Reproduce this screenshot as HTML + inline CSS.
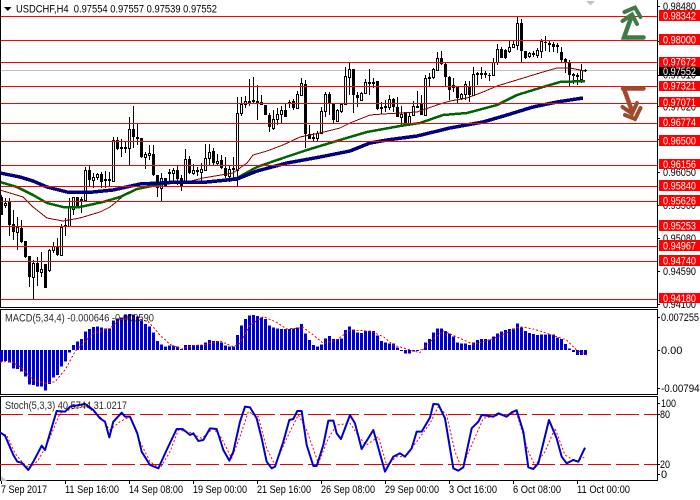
<!DOCTYPE html>
<html><head><meta charset="utf-8"><style>
html,body{margin:0;padding:0;background:#fff;width:700px;height:500px;overflow:hidden}
svg{display:block}
text{font-family:"Liberation Sans",sans-serif;font-size:11px;fill:#000}
.w{fill:#fff}
</style></head><body>
<svg width="700" height="500" viewBox="0 0 700 500" xmlns="http://www.w3.org/2000/svg">
<rect width="700" height="500" fill="#fff"/>
<g shape-rendering="crispEdges">
<path d="M0 70.5H657" stroke="#c0c0c0" fill="none"/>
<!-- wicks -->
<path stroke="#000" fill="none" d="M1.5 195V215M5.5 198V208M9.5 198V236M13.5 210V240M17.5 217V250M21.5 220V243M25.5 241V258M29.5 256V287M33.5 260V299M37.5 257V286M41.5 252V277M45.5 264V288M49.5 249V272M53.5 242V253M57.5 238V256M61.5 224V256M65.5 218V236M69.5 198V226M73.5 197V215M77.5 197V207M81.5 197V213M85.5 167V201M89.5 166V187M93.5 173V188M97.5 173V180M101.5 172V188M105.5 171V188M109.5 172V187M113.5 137V182M117.5 137V150M121.5 139V157M125.5 142V153M129.5 117V165M133.5 106V148M137.5 124V145M141.5 138V158M145.5 152V169M149.5 145V160M153.5 145V176M157.5 175V197M161.5 173V201M165.5 178V187M169.5 169V183M173.5 168V182M177.5 165V185M181.5 175V191M185.5 149V181M189.5 156V174M193.5 164V175M197.5 167V176M201.5 163V181M205.5 144V170M209.5 144V165M213.5 148V165M217.5 154V166M221.5 155V169M225.5 157V178M229.5 166V182M233.5 157V178M237.5 97V186M241.5 97V116M245.5 96V108M249.5 79V106M253.5 77V103M257.5 85V120M261.5 95V105M265.5 105V115M269.5 113V132M273.5 110V130M277.5 108V125M281.5 106V123M285.5 103V117M289.5 100V108M293.5 99V110M297.5 91V109M301.5 78V95M305.5 80V148M309.5 125V139M313.5 133V142M317.5 131V142M321.5 107V133M325.5 92V117M329.5 92V115M333.5 103V123M337.5 109V121M341.5 103V113M345.5 67V104M349.5 63V95M353.5 69V113M357.5 92V107M361.5 92V100M365.5 79V93M369.5 69V95M373.5 78V88M377.5 81V110M381.5 102V114M385.5 100V112M389.5 95V110M393.5 98V112M397.5 97V117M401.5 106V125M405.5 113V126M409.5 113V124M413.5 101V115M417.5 91V108M421.5 95V115M425.5 75V115M429.5 73V86M433.5 68V79M437.5 52V70M441.5 51V65M445.5 63V86M449.5 76V100M453.5 78V92M457.5 86V103M461.5 93V100M465.5 81V100M469.5 81V102M473.5 67V95M477.5 72V85M481.5 67V79M485.5 71V78M489.5 73V81M493.5 58V75M497.5 44V65M501.5 47V58M505.5 49V59M509.5 40V53M513.5 41V48M517.5 17V50M521.5 19V62M525.5 51V59M529.5 52V58M533.5 51V57M537.5 48V58M541.5 39V58M545.5 36V51M549.5 40V52M553.5 42V52M557.5 43V53M561.5 47V62M565.5 58V73M569.5 60V86M573.5 73V84M577.5 73V85M581.5 64V83M585.5 69V72"/>
<!-- black bodies -->
<path fill="#000" d="M0 197h3V215H0zM8 202h3V225H8zM12 224h3V232h-3zM20 228h3V242h-3zM24 241h3V257h-3zM28 256h3V277h-3zM36 263h3V272h-3zM44 264h3V288h-3zM56 246h3V255h-3zM64 225h3V227h-3zM76 197h3V206h-3zM80 199h3V202h-3zM88 170h3V180h-3zM100 174h3V182h-3zM104 179h3V181h-3zM108 179h3V181h-3zM116 140h3V149h-3zM120 147h3V149h-3zM124 147h3V149h-3zM132 129h3V137h-3zM136 137h3V139h-3zM140 138h3V157h-3zM152 154h3V175h-3zM156 175h3V188h-3zM164 178h3V186h-3zM168 172h3V174h-3zM176 170h3V179h-3zM180 178h3V187h-3zM188 159h3V173h-3zM196 170h3V172h-3zM212 151h3V163h-3zM220 160h3V168h-3zM224 168h3V176h-3zM232 168h3V170h-3zM248 101h3V103h-3zM252 100h3V102h-3zM256 101h3V103h-3zM260 102h3V105h-3zM264 105h3V115h-3zM268 115h3V127h-3zM284 110h3V117h-3zM288 102h3V104h-3zM292 101h3V108h-3zM304 84h3V134h-3zM308 134h3V139h-3zM312 137h3V139h-3zM328 94h3V103h-3zM332 103h3V120h-3zM352 69h3V95h-3zM356 95h3V98h-3zM368 82h3V84h-3zM372 82h3V84h-3zM376 81h3V109h-3zM380 107h3V109h-3zM384 106h3V108h-3zM392 99h3V107h-3zM396 107h3V117h-3zM404 113h3V123h-3zM416 106h3V108h-3zM420 104h3V115h-3zM428 77h3V79h-3zM440 58h3V64h-3zM444 64h3V77h-3zM448 77h3V90h-3zM452 85h3V88h-3zM456 86h3V98h-3zM468 86h3V95h-3zM476 73h3V75h-3zM480 73h3V75h-3zM484 73h3V75h-3zM488 75h3V76h-3zM500 49h3V58h-3zM504 50h3V58h-3zM520 23h3V51h-3zM524 51h3V58h-3zM532 53h3V55h-3zM544 42h3V43h-3zM548 43h3V45h-3zM552 44h3V47h-3zM556 45h3V47h-3zM560 52h3V60h-3zM564 59h3V62h-3zM568 62h3V75h-3zM572 74h3V76h-3zM576 75h3V77h-3zM584 70h3V71h-3z"/>
<!-- white bodies -->
<path fill="#fff" stroke="#000" d="M4.500 203.500h2V205.500h-2zM16.500 227.500h2V232.500h-2zM32.500 263.500h2V277.500h-2zM40.500 269.500h2V272.500h-2zM48.500 250.500h2V270.500h-2zM52.500 246.500h2V250.500h-2zM60.500 227.500h2V255.500h-2zM68.500 207.500h2V226.500h-2zM72.500 197.500h2V209.500h-2zM84.500 170.500h2V200.500h-2zM92.500 177.500h2V180.500h-2zM96.500 174.500h2V177.500h-2zM112.500 140.500h2V181.500h-2zM128.500 129.500h2V148.500h-2zM144.500 154.500h2V157.500h-2zM148.500 153.500h2V155.500h-2zM160.500 178.500h2V188.500h-2zM172.500 170.500h2V173.500h-2zM184.500 159.500h2V181.500h-2zM192.500 170.500h2V173.500h-2zM200.500 169.500h2V172.500h-2zM204.500 158.500h2V170.500h-2zM208.500 152.500h2V158.500h-2zM216.500 161.500h2V163.500h-2zM228.500 169.500h2V176.500h-2zM236.500 113.500h2V170.500h-2zM240.500 104.500h2V113.500h-2zM244.500 101.500h2V104.500h-2zM272.500 119.500h2V128.500h-2zM276.500 114.500h2V119.500h-2zM280.500 110.500h2V114.500h-2zM296.500 94.500h2V108.500h-2zM300.500 83.500h2V95.500h-2zM316.500 133.500h2V138.500h-2zM320.500 111.500h2V133.500h-2zM324.500 94.500h2V111.500h-2zM336.500 110.500h2V121.500h-2zM340.500 104.500h2V111.500h-2zM344.500 76.500h2V104.500h-2zM348.500 69.500h2V77.500h-2zM360.500 93.500h2V100.500h-2zM364.500 82.500h2V93.500h-2zM388.500 99.500h2V107.500h-2zM400.500 114.500h2V117.500h-2zM408.500 116.500h2V123.500h-2zM412.500 106.500h2V115.500h-2zM424.500 78.500h2V115.500h-2zM432.500 69.500h2V77.500h-2zM436.500 58.500h2V70.500h-2zM460.500 94.500h2V98.500h-2zM464.500 84.500h2V94.500h-2zM472.500 74.500h2V95.500h-2zM492.500 62.500h2V75.500h-2zM496.500 49.500h2V62.500h-2zM508.500 47.500h2V51.500h-2zM512.500 44.500h2V47.500h-2zM516.500 23.500h2V45.500h-2zM528.500 53.500h2V56.500h-2zM536.500 50.500h2V55.500h-2zM540.500 41.500h2V51.500h-2zM580.500 70.500h2V79.500h-2z"/>
</g>
<!-- moving averages -->
<g fill="none" stroke-linejoin="round" shape-rendering="crispEdges">
<polyline stroke="#8b0000" stroke-width="1" points="0,190 23,197 33,207 47,218 63,221 80,218 100,212 110,207 127,193 157,183 187,182 203,178 233,173 247,163 253,155 267,151 283,145 300,137 320,133 340,128 350,123 370,115 383,114 400,113 417,112 437,105 450,101 467,98 483,92 497,86 520,79 543,72 557,68 570,68 585,71"/>
<polyline stroke="#006400" stroke-width="2.500" points="0,182 17,187 33,195 47,203 63,207 80,207 103,202 120,197 137,189 167,183 207,182 237,178 257,167 283,158 307,150 330,143 350,137 367,132 400,126 420,123 443,115 467,113 497,105 517,95 543,87 560,82 585,81"/>
<polyline stroke="#00007f" stroke-width="3.500" points="0,173 20,177 33,181 47,187 67,192 93,192 113,190 140,184 180,182 207,182 237,179 257,171 287,163 320,157 350,151 370,143 387,140 417,136 450,128 483,122 507,115 533,107 557,102 583,98"/>
</g>
<!-- horizontal levels -->
<path shape-rendering="crispEdges" stroke="#f00" fill="none" d="M0 16.500H657M0 40.500H657M0 62.500H657M0 86.500H657M0 103.500H657M0 123.500H657M0 141.500H657M0 165.500H657M0 186.500H657M0 201.500H657M0 226.500H657M0 246.500H657M0 261.500H657M0 299.500H657"/>
<!-- frames -->
<path shape-rendering="crispEdges" stroke="#000" fill="none" d="M0.500 0V307.500H657M657.500 0V308M0.500 309.500H657.500V394.500H0.500ZM0.500 396.500H657.500V480.500H0.500Z"/>
<path shape-rendering="crispEdges" stroke="#000" fill="none" d="M658 6.500h2M658 41.500h2M658 75.500h2M658 106.500h2M658 139.500h2M658 172.500h2M658 205.500h2M658 238.500h2M658 271.500h2M658 304.500h2M658 317.500h2M658 350.500h2M658 388.500h2M658 403.500h2M658 414.500h2M658 464.500h2M658 474.500h2M1.500 481v3M65.500 481v3M129.500 481v3M193.500 481v3M257.500 481v3M321.500 481v3M385.500 481v3M449.500 481v3M513.500 481v3M577.500 481v3"/>
<path fill="#c4c4c4" d="M586 1h9l-4.500 4.500z"/>
<path fill="#c4c4c4" d="M1 476l6 5H1z"/>
<!-- header -->
<path fill="#000" d="M4 7h7.500l-3.700 4z"/>
<text x="16" y="12.500" textLength="201" lengthAdjust="spacingAndGlyphs" xml:space="preserve">USDCHF,H4  0.97554 0.97557 0.97539 0.97552</text>
<!-- axis labels underneath -->
<text x="663" y="10" textLength="33" lengthAdjust="spacingAndGlyphs">0.98480</text>
<text x="663" y="78.500" textLength="33" lengthAdjust="spacingAndGlyphs">0.97510</text>
<text x="663" y="110.500" textLength="33" lengthAdjust="spacingAndGlyphs">0.97020</text>
<text x="663" y="176" textLength="33" lengthAdjust="spacingAndGlyphs">0.96050</text>
<text x="663" y="209" textLength="33" lengthAdjust="spacingAndGlyphs">0.95560</text>
<text x="663" y="242" textLength="33" lengthAdjust="spacingAndGlyphs">0.95080</text>
<text x="663" y="275" textLength="33" lengthAdjust="spacingAndGlyphs">0.94590</text>
<text x="663" y="308" textLength="33" lengthAdjust="spacingAndGlyphs">0.94100</text>
<!-- price tags -->
<g shape-rendering="crispEdges" fill="#f00">
<rect x="659" y="10" width="41" height="11"/><rect x="659" y="34" width="41" height="11"/><rect x="659" y="57" width="41" height="10"/><rect x="659" y="81" width="41" height="10"/><rect x="659" y="97" width="41" height="10"/><rect x="659" y="117" width="41" height="10"/><rect x="659" y="135" width="41" height="11"/><rect x="659" y="159" width="41" height="10"/><rect x="659" y="180" width="41" height="11"/><rect x="659" y="195" width="41" height="11"/><rect x="659" y="220" width="41" height="11"/><rect x="659" y="240" width="41" height="11"/><rect x="659" y="255" width="41" height="11"/><rect x="659" y="293" width="41" height="10"/>
<rect x="659" y="67" width="41" height="9" fill="#000"/>
</g>
<g text-anchor="start">
<text class="w" x="663" y="19.500" textLength="33" lengthAdjust="spacingAndGlyphs">0.98342</text>
<text class="w" x="663" y="43.500" textLength="33" lengthAdjust="spacingAndGlyphs">0.98000</text>
<text class="w" x="663" y="65.500" textLength="33" lengthAdjust="spacingAndGlyphs">0.97672</text>
<text class="w" x="663" y="75" textLength="33" lengthAdjust="spacingAndGlyphs">0.97552</text>
<text class="w" x="663" y="89.500" textLength="33" lengthAdjust="spacingAndGlyphs">0.97321</text>
<text class="w" x="663" y="106" textLength="33" lengthAdjust="spacingAndGlyphs">0.97071</text>
<text class="w" x="663" y="126" textLength="33" lengthAdjust="spacingAndGlyphs">0.96774</text>
<text class="w" x="663" y="144.500" textLength="33" lengthAdjust="spacingAndGlyphs">0.96500</text>
<text class="w" x="663" y="168" textLength="33" lengthAdjust="spacingAndGlyphs">0.96156</text>
<text class="w" x="663" y="189.500" textLength="33" lengthAdjust="spacingAndGlyphs">0.95840</text>
<text class="w" x="663" y="204.500" textLength="33" lengthAdjust="spacingAndGlyphs">0.95626</text>
<text class="w" x="663" y="229.500" textLength="33" lengthAdjust="spacingAndGlyphs">0.95253</text>
<text class="w" x="663" y="249.500" textLength="33" lengthAdjust="spacingAndGlyphs">0.94967</text>
<text class="w" x="663" y="264.500" textLength="33" lengthAdjust="spacingAndGlyphs">0.94740</text>
<text class="w" x="663" y="302" textLength="33" lengthAdjust="spacingAndGlyphs">0.94180</text>
</g>
<!-- arrows -->
<g fill="none" stroke-linejoin="miter" stroke-linecap="round">
<g stroke="#3f7a47" stroke-width="4">
<path d="M624.500 12 635 7.500 640.500 17"/>
<path d="M622.500 21 632 14.500 637 24"/>
<path stroke-width="4.500" d="M632 15 624 37.500H643.500"/>
</g>
<g stroke="#a04a2c" stroke-width="4">
<path stroke-width="4.500" d="M623 88.500H643.500M624 89 632 111"/>
<path d="M622.500 107 632 113.500 637 103"/>
<path d="M625 115 635 119 640.500 108"/>
</g>
</g>
<!-- MACD -->
<g transform="translate(0 305) scale(.33333)" shape-rendering="crispEdges">
<path fill="#0000cd" d="M0 135h9V170H0zM12 135h9V168h-9zM24 135h9V172h-9zM36 135h9V190h-9zM48 135h9V192h-9zM60 135h9V200h-9zM72 135h9V215h-9zM84 135h9V238h-9zM96 135h9V240h-9zM108 135h9V245h-9zM120 135h9V245h-9zM132 135h9V257h-9zM144 135h9V237h-9zM156 135h9V218h-9zM168 135h9V210h-9zM180 135h9V185h-9zM192 135h9V170h-9zM204 135h9V143h-9zM216 135h9V120h-9zM228 135h9V110h-9zM240 135h9V102h-9zM252 135h9V80h-9zM264 135h9V72h-9zM276 135h9V66h-9zM288 135h9V64h-9zM300 135h9V67h-9zM312 135h9V70h-9zM324 135h9V70h-9zM336 135h9V47h-9zM348 135h9V40h-9zM360 135h9V38h-9zM372 135h9V30h-9zM384 135h9V27h-9zM396 135h9V28h-9zM408 135h9V35h-9zM420 135h9V47h-9zM432 135h9V57h-9zM444 135h9V65h-9zM456 135h9V83h-9zM468 135h9V108h-9zM480 135h9V118h-9zM492 135h9V125h-9zM504 135h9V122h-9zM516 135h9V122h-9zM528 135h9V125h-9zM540 135h9V132h-9zM552 135h9V120h-9zM564 135h9V120h-9zM576 135h9V120h-9zM588 135h9V120h-9zM600 135h9V120h-9zM612 135h9V112h-9zM624 135h9V105h-9zM636 135h9V108h-9zM648 135h9V108h-9zM660 135h9V112h-9zM672 135h9V122h-9zM684 135h9V125h-9zM696 135h9V125h-9zM708 135h9V90h-9zM720 135h9V62h-9zM732 135h9V42h-9zM744 135h9V32h-9zM756 135h9V30h-9zM768 135h9V33h-9zM780 135h9V37h-9zM792 135h9V42h-9zM804 135h9V62h-9zM816 135h9V68h-9zM828 135h9V70h-9zM840 135h9V72h-9zM852 135h9V72h-9zM864 135h9V72h-9zM876 135h9V70h-9zM888 135h9V68h-9zM900 135h9V57h-9zM912 135h9V85h-9zM924 135h9V105h-9zM936 135h9V120h-9zM948 135h9V125h-9zM960 135h9V118h-9zM972 135h9V100h-9zM984 135h9V93h-9zM996 135h9V102h-9zM1008 135h9V102h-9zM1020 135h9V100h-9zM1032 135h9V75h-9zM1044 135h9V65h-9zM1056 135h9V73h-9zM1068 135h9V82h-9zM1080 135h9V84h-9zM1092 135h9V78h-9zM1104 135h9V78h-9zM1116 135h9V78h-9zM1128 135h9V92h-9zM1140 135h9V108h-9zM1152 135h9V113h-9zM1164 135h9V115h-9zM1176 135h9V115h-9zM1188 135h9V128h-9zM1200 135h9V138h-9zM1212 135h9V146h-9zM1224 135h9V146h-9zM1236 135h9V140h-9zM1248 135h9V138h-9zM1260 135h9V133h-9zM1272 135h9V113h-9zM1284 135h9V102h-9zM1296 135h9V82h-9zM1308 135h9V71h-9zM1320 135h9V70h-9zM1332 135h9V78h-9zM1344 135h9V85h-9zM1356 135h9V95h-9zM1368 135h9V112h-9zM1380 135h9V115h-9zM1392 135h9V115h-9zM1404 135h9V120h-9zM1416 135h9V112h-9zM1428 135h9V105h-9zM1440 135h9V102h-9zM1452 135h9V102h-9zM1464 135h9V104h-9zM1476 135h9V94h-9zM1488 135h9V85h-9zM1500 135h9V80h-9zM1512 135h9V75h-9zM1524 135h9V72h-9zM1536 135h9V70h-9zM1548 135h9V55h-9zM1560 135h9V67h-9zM1572 135h9V78h-9zM1584 135h9V84h-9zM1596 135h9V87h-9zM1608 135h9V90h-9zM1620 135h9V88h-9zM1632 135h9V88h-9zM1644 135h9V88h-9zM1656 135h9V88h-9zM1668 135h9V98h-9zM1680 135h9V102h-9zM1692 135h9V117h-9zM1704 135h9V130h-9zM1716 135h9V141h-9zM1728 135h9V150h-9zM1740 135h9V150h-9zM1752 135h9V150h-9z"/>
<polyline fill="none" stroke="#f00" stroke-width="3" stroke-dasharray="6 6" points="0,172 30,168 60,185 100,225 136,235 165,230 195,195 225,140 250,115 280,85 330,70 360,45 400,37 445,50 480,90 510,118 545,132 580,122 620,118 660,108 700,125 720,115 750,60 790,35 830,52 860,72 910,68 940,90 970,115 1010,105 1050,75 1110,78 1150,95 1180,120 1220,132 1260,143 1290,110 1330,78 1380,100 1420,118 1470,105 1510,88 1560,65 1600,72 1650,88 1700,105 1730,135 1760,150"/>
</g>
<text x="5" y="321.500" textLength="149" lengthAdjust="spacingAndGlyphs" fill-opacity=".85">MACD(5,34,4) -0.000646 -0.000590</text>
<text x="661" y="321" textLength="38" lengthAdjust="spacingAndGlyphs">0.007255</text>
<text x="661" y="354">0.00</text>
<text x="661" y="392" textLength="44" lengthAdjust="spacingAndGlyphs">-0.007947</text>
<!-- Stochastic -->
<path shape-rendering="crispEdges" fill="none" stroke="#e60000" stroke-dasharray="23 5" d="M0 414.500H657M0 464.500H657"/>
<g transform="translate(0 305) scale(.33333)" fill="none" stroke-linejoin="round">
<polyline stroke="#f00" stroke-width="3" stroke-dasharray="6 6" points="0,385 20,390 45,445 70,475 90,490 115,465 135,430 155,385 180,325 220,310 260,305 300,335 330,375 360,350 390,335 420,410 450,470 480,490 510,440 535,375 570,382 605,400 640,370 665,400 695,460 720,395 745,320 775,335 800,430 825,480 860,400 895,330 920,375 955,475 985,400 1010,360 1050,355 1080,400 1100,420 1135,395 1160,480 1190,455 1215,455 1250,410 1290,355 1315,305 1340,330 1365,440 1385,490 1415,420 1450,340 1500,330 1550,325 1585,440 1605,482 1635,440 1665,370 1695,450 1730,470 1755,455"/>
<polyline stroke="#0000cd" stroke-width="6" points="0,382 15,392 40,450 52,470 65,473 85,495 100,470 125,422 135,435 150,385 170,318 195,320 210,305 255,297 280,315 300,340 315,350 328,397 340,350 365,323 375,335 390,335 412,385 425,440 450,480 475,490 500,435 530,372 548,372 570,390 580,385 595,408 610,405 630,370 650,372 670,435 688,467 700,440 720,350 735,305 750,307 770,340 785,400 800,470 815,490 825,485 850,410 868,345 880,342 892,318 905,318 920,420 940,483 950,483 970,420 985,347 1000,347 1010,385 1023,402 1050,330 1065,355 1085,432 1120,375 1155,500 1180,455 1200,445 1215,455 1235,430 1250,380 1265,380 1290,338 1300,297 1315,298 1335,340 1360,490 1375,497 1390,487 1415,370 1435,350 1445,330 1480,335 1495,325 1520,335 1535,322 1550,316 1570,380 1585,487 1600,492 1615,475 1647,345 1670,400 1685,455 1700,475 1720,465 1735,470 1755,428"/>
</g>
<text x="5" y="409" textLength="122" lengthAdjust="spacingAndGlyphs" fill-opacity=".85">Stoch(5,3,3) 40.5744 31.0217</text>
<text x="661" y="407" textLength="15" lengthAdjust="spacingAndGlyphs">100</text>
<text x="660" y="418" textLength="10" lengthAdjust="spacingAndGlyphs">80</text>
<text x="660" y="468" textLength="10" lengthAdjust="spacingAndGlyphs">20</text>
<text x="661" y="478">0</text>
<!-- time axis -->
<g>
<text x="1" y="493" textLength="46" lengthAdjust="spacingAndGlyphs">7 Sep 2017</text>
<text x="65" y="493" textLength="54" lengthAdjust="spacingAndGlyphs">11 Sep 16:00</text>
<text x="129" y="493" textLength="54" lengthAdjust="spacingAndGlyphs">14 Sep 08:00</text>
<text x="193" y="493" textLength="54" lengthAdjust="spacingAndGlyphs">19 Sep 00:00</text>
<text x="257" y="493" textLength="54" lengthAdjust="spacingAndGlyphs">21 Sep 16:00</text>
<text x="321" y="493" textLength="54" lengthAdjust="spacingAndGlyphs">26 Sep 08:00</text>
<text x="385" y="493" textLength="54" lengthAdjust="spacingAndGlyphs">29 Sep 00:00</text>
<text x="449" y="493" textLength="48" lengthAdjust="spacingAndGlyphs">3 Oct 16:00</text>
<text x="513" y="493" textLength="48" lengthAdjust="spacingAndGlyphs">6 Oct 08:00</text>
<text x="577" y="493" textLength="53" lengthAdjust="spacingAndGlyphs">11 Oct 00:00</text>
</g>
</svg>
</body></html>
